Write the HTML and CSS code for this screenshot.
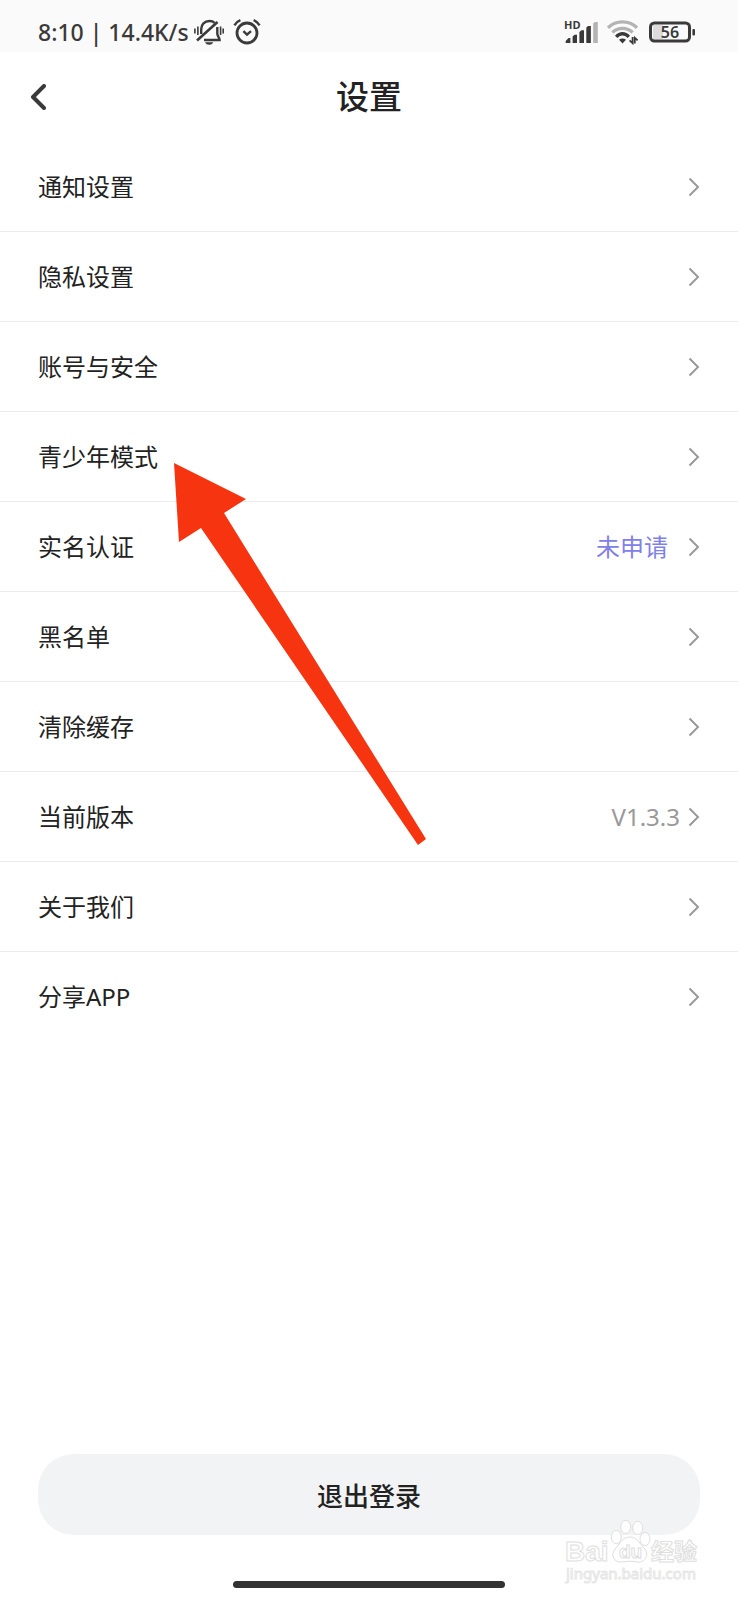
FILE: index.html
```
<!DOCTYPE html>
<html lang="zh-CN">
<head>
    <meta charset="utf-8">
    <meta name="viewport" content="width=device-width, initial-scale=1">
    <title>设置</title>
    <link rel="stylesheet" href="styles.css">
</head>
<body>
    <svg class="symbols" aria-hidden="true">
        <symbol id="chevron" viewBox="0 0 12 20">
            <path d="M1.5 1.5 L10 10 L1.5 18.5" fill="none" stroke="#999" stroke-width="2"/>
        </symbol>
    </svg>

    <!-- phone status bar -->
    <div class="status-bar">
        <div class="status-left">
            <span class="status-text">8:10 | 14.4K/s</span>
            <svg class="icon-mute" viewBox="0 0 30 26" fill="none" stroke="#3a3a3a" stroke-width="2.4">
                <path d="M7.2 15 V10 C7.2 5.5 10.5 2 15.5 2 C17.7 2 19.3 2.6 20.6 3.8 M23.3 8 V14.5 C23.3 17.5 25.6 18.4 25.6 21 H10"/>
                <path d="M3 21.5 L23.5 3" stroke-width="2.6"/>
                <path d="M.9 9.5 V14.5 M3.9 7.5 V16 M26.6 7.5 V16 M29.2 9.5 V14.5" stroke-width="1.6"/>
                <path d="M11 23.3 H19.3 C18.5 25 17 25.8 15.2 25.8 C13.3 25.8 11.8 25 11 23.3 Z" fill="#3a3a3a" stroke="none"/>
            </svg>
            <svg class="icon-alarm" viewBox="0 0 28 26" fill="none" stroke="#3a3a3a" stroke-width="2.8">
                <circle cx="14" cy="14" r="10"/>
                <path d="M1.4 6.4 C2.8 4 4.8 2.2 7.4 1.2 M20.6 1.2 C23.2 2.2 25.2 4 26.6 6.4" stroke-width="2.4"/>
                <path d="M10.4 12.2 L14 15.6 L18 12.2" stroke-width="2.4"/>
            </svg>
        </div>
        <div class="status-right">
            <svg class="icon-signal" viewBox="0 0 34 24" fill="#3a3a3a">
                <text x="0" y="9" class="hd-text">HD</text>
                <path d="M1.7 23 V21 L4.5 18 H6.4 V23 Z"/>
                <path d="M8.6 23 V16.5 L10.5 14.7 H13 V23 Z"/>
                <path d="M15.4 23 V12 L17.4 10.3 H20 V23 Z"/>
                <path d="M22.3 23 V7.6 L24 6 H26.9 V23 Z"/>
                <path d="M29.2 23 V3.6 L31 2 H33.8 V23 Z" fill="#b3b3b3"/>
            </svg>
            <svg class="icon-wifi" viewBox="0 0 32 26" fill="none" stroke-width="3.4">
                <path d="M1 8.8 C9 .9 22 .9 30 8.8" stroke="#b3b3b3"/>
                <path d="M5.4 13.5 C11 8 20 8 25.6 13.5" stroke="#b3b3b3"/>
                <path d="M9.2 17.8 C13 13.8 18 13.8 21.8 17.8" stroke="#3a3a3a"/>
                <path d="M12 20.8 C14 19.2 17 19.2 19 20.8 L15.5 24.6 Z" fill="#3a3a3a"/>
                <path d="M25.6 18 V24.2 L22.6 21.4 M27.8 24.6 V18.8 L30.6 21.4" stroke="#3a3a3a" stroke-width="1.8"/>
            </svg>
            <svg class="icon-battery" viewBox="0 0 46 22">
                <rect x="4" y="4" width="10" height="14" fill="#dcdcdc"/>
                <rect x="1.5" y="2" width="39" height="18" rx="4" fill="none" stroke="#3a3a3a" stroke-width="3"/>
                <rect x="43.4" y="8" width="2.6" height="6.4" rx="1" fill="#3a3a3a"/>
                <text x="21" y="17" text-anchor="middle" class="battery-text">56</text>
            </svg>
        </div>
    </div>

    <header class="header">
        <button type="button" class="back" aria-label="返回">
            <svg viewBox="0 0 16 26"><path d="M14 2 L3 13 L14 24" fill="none" stroke="#3a3a3a" stroke-width="4" stroke-linecap="round" stroke-linejoin="round"/></svg>
        </button>
        <h1>设置</h1>
    </header>

    <ul class="list">
        <li><a href="#" class="row"><span>通知设置</span><svg class="chevron"><use href="#chevron"/></svg></a></li>
        <li><a href="#" class="row"><span>隐私设置</span><svg class="chevron"><use href="#chevron"/></svg></a></li>
        <li><a href="#" class="row"><span>账号与安全</span><svg class="chevron"><use href="#chevron"/></svg></a></li>
        <li><a href="#" class="row"><span>青少年模式</span><svg class="chevron"><use href="#chevron"/></svg></a></li>
        <li><a href="#" class="row"><span>实名认证</span><span class="value state">未申请</span><svg class="chevron"><use href="#chevron"/></svg></a></li>
        <li><a href="#" class="row"><span>黑名单</span><svg class="chevron"><use href="#chevron"/></svg></a></li>
        <li><a href="#" class="row"><span>清除缓存</span><svg class="chevron"><use href="#chevron"/></svg></a></li>
        <li><a href="#" class="row"><span>当前版本</span><span class="value version">V1.3.3</span><svg class="chevron"><use href="#chevron"/></svg></a></li>
        <li><a href="#" class="row"><span>关于我们</span><svg class="chevron"><use href="#chevron"/></svg></a></li>
        <li><a href="#" class="row"><span>分享APP</span><svg class="chevron"><use href="#chevron"/></svg></a></li>
    </ul>

    <footer class="footer">
        <button type="button" class="logout">退出登录</button>
        <div class="home-bar"></div>
    </footer>

    <!-- red arrow pointing at 青少年模式 -->
    <svg class="pointer" viewBox="0 0 252 383" aria-hidden="true">
        <path d="M0 0 L72 36 L50 50 L252 376 L244 382 L27 65 L5 79 Z" fill="#f63510"/>
    </svg>

    <!-- watermark -->
    <svg class="watermark" viewBox="0 0 136 66">
        <g fill="#fff" fill-opacity=".8" stroke="#dedede">
            <text x="1" y="41" class="wm-big">Bai</text>
            <ellipse cx="52.3" cy="17" rx="5" ry="6.6"/>
            <ellipse cx="61.7" cy="7" rx="5" ry="6.6"/>
            <ellipse cx="73.7" cy="8" rx="5" ry="6.6"/>
            <ellipse cx="81" cy="19" rx="5" ry="6.6"/>
            <path d="M66 17 C73 17 76 24 80 28 C86 34 81 43 74 42 C68 41 64 41 58 42 C50 43 46 35 51 29 C56 24 58 17 66 17 Z"/>
            <text x="55" y="38" class="wm-du">du</text>
            <text x="87" y="40" class="wm-cn">经验</text>
            <text x="2" y="59" class="wm-url">jingyan.baidu.com</text>
        </g>
    </svg>
</body>
</html>
```

FILE: styles.css
```
* {
    box-sizing: border-box;
}

body {
    position: relative;
    display: flex;
    flex-direction: column;
    min-height: 100vh;
    margin: 0;
    background: #fff;
    color: #222;
    font-family: "Noto Sans", "Noto Sans CJK SC", sans-serif;
    font-size: 24px;
}

button {
    border: none;
    padding: 0;
    color: inherit;
    font-family: inherit;
}

.symbols {
    display: none;
}

/* status bar */
.status-bar {
    display: flex;
    justify-content: space-between;
    align-items: center;
    height: 52px;
    padding: 12px 43px 0 38px;
    background: #fafafa;
    color: #3a3a3a;
}

.status-left,
.status-right {
    display: flex;
    align-items: center;
}

.status-text {
    font-size: 23px;
    font-weight: 500;
    line-height: 32px;
}

.icon-mute {
    width: 30px;
    height: 26px;
    margin-left: 5px;
}

.icon-alarm {
    width: 28px;
    height: 26px;
    margin-left: 9px;
}

.icon-signal {
    width: 34px;
    height: 24px;
    overflow: visible;
}

.icon-wifi {
    width: 32px;
    height: 26px;
    margin-left: 9px;
}

.icon-battery {
    width: 46px;
    height: 22px;
    margin-left: 10px;
}

.hd-text {
    font-size: 11px;
    font-weight: 700;
}

.battery-text {
    font-size: 16px;
    font-weight: 600;
    fill: #3a3a3a;
}

/* title */
.header {
    display: grid;
    grid-template-columns: 48px 1fr 48px;
    align-items: center;
    height: 90px;
    padding: 0 14px;
}

.back {
    display: flex;
    justify-content: center;
    background: none;
}

.back svg {
    width: 16px;
    height: 26px;
}

h1 {
    margin: 0;
    font-size: 33px;
    font-weight: 500;
    line-height: 48px;
    text-align: center;
}

/* settings list */
.list {
    margin: 0;
    padding: 0;
    list-style: none;
}

.row {
    display: flex;
    align-items: center;
    height: 90px;
    padding: 0 38px;
    border-bottom: 1px solid #ebebeb;
    color: inherit;
    line-height: 36px;
    text-decoration: none;
}

.list li:last-child .row {
    border-bottom: none;
}

.chevron {
    width: 12px;
    height: 20px;
    margin-left: auto;
}

.value {
    margin-left: auto;
}

.value + .chevron {
    margin-left: 20px;
}

.state {
    color: #8080e8;
}

.version {
    color: #999;
}

.version + .chevron {
    margin-left: 8px;
}

/* bottom */
.footer {
    display: flex;
    flex-direction: column;
    align-items: center;
    margin-top: auto;
    padding: 0 38px 12px;
}

.logout {
    width: 100%;
    height: 81px;
    border-radius: 36px;
    background: #f2f3f5;
    font-size: 26px;
    font-weight: 500;
}

.home-bar {
    width: 41%;
    height: 7px;
    margin-top: 46px;
    border-radius: 4px;
    background: #333;
}

.pointer {
    position: absolute;
    top: 463px;
    left: 174px;
    width: 252px;
    height: 383px;
    pointer-events: none;
}

.watermark {
    position: absolute;
    right: 38px;
    bottom: 14px;
    width: 136px;
    height: 66px;
    overflow: visible;
    pointer-events: none;
}

.wm-big {
    font-family: "Liberation Sans", sans-serif;
    font-size: 28px;
    font-weight: 700;
}

.wm-du {
    font-family: "Liberation Sans", sans-serif;
    font-size: 19px;
    font-weight: 700;
}

.wm-cn {
    font-family: "Noto Sans CJK SC", sans-serif;
    font-size: 23px;
    font-weight: 700;
}

.wm-url {
    font-size: 15px;
    stroke: #e6e6e6;
}
```
